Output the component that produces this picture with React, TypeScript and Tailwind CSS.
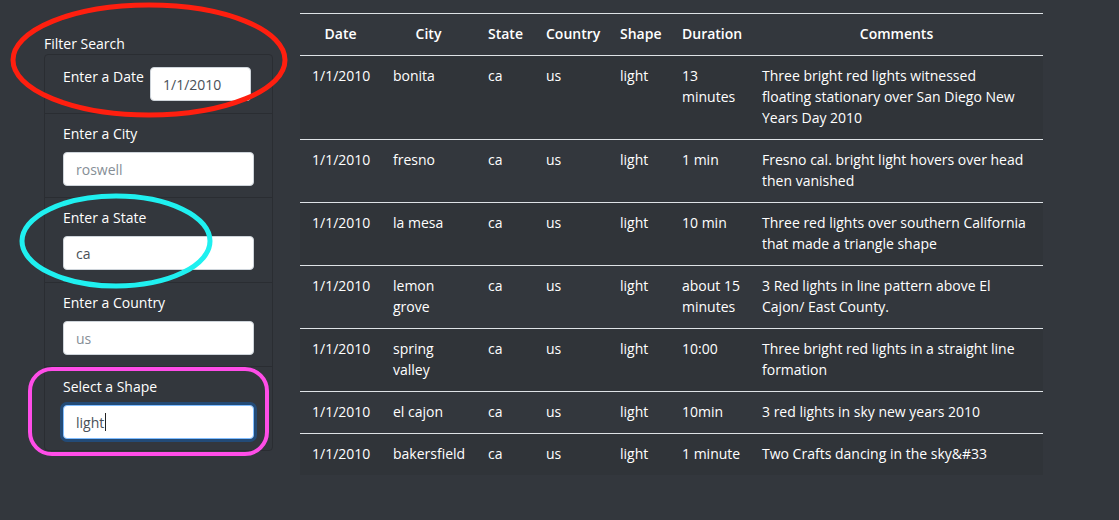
import React from "react";

type Row = { date: string; city: string[]; state: string; country: string; shape: string; duration: string[]; comments: string[] };

const rows: Row[] = [
  { date: "1/1/2010", city: ["bonita"], state: "ca", country: "us", shape: "light", duration: ["13", "minutes"], comments: ["Three bright red lights witnessed", "floating stationary over San Diego New", "Years Day 2010"] },
  { date: "1/1/2010", city: ["fresno"], state: "ca", country: "us", shape: "light", duration: ["1 min"], comments: ["Fresno cal. bright light hovers over head", "then vanished"] },
  { date: "1/1/2010", city: ["la mesa"], state: "ca", country: "us", shape: "light", duration: ["10 min"], comments: ["Three red lights over southern California", "that made a triangle shape"] },
  { date: "1/1/2010", city: ["lemon", "grove"], state: "ca", country: "us", shape: "light", duration: ["about 15", "minutes"], comments: ["3 Red lights in line pattern above El", "Cajon/ East County."] },
  { date: "1/1/2010", city: ["spring", "valley"], state: "ca", country: "us", shape: "light", duration: ["10:00"], comments: ["Three bright red lights in a straight line", "formation"] },
  { date: "1/1/2010", city: ["el cajon"], state: "ca", country: "us", shape: "light", duration: ["10min"], comments: ["3 red lights in sky new years 2010"] },
  { date: "1/1/2010", city: ["bakersfield"], state: "ca", country: "us", shape: "light", duration: ["1 minute"], comments: ["Two Crafts dancing in the sky&#33"] },
];

const Lines = ({ lines }: { lines: string[] }) => (
  <>
    {lines.map((l, i) => (
      <div key={i} className="whitespace-nowrap">{l}</div>
    ))}
  </>
);

const inputCls =
  "block h-[34px] w-full rounded-[4px] border border-[#ced4da] bg-white px-[12px] text-[14px] text-[#495057] outline-none placeholder:text-[#868e96]";

const td = "px-[12px] pt-[9px] pb-[11px] align-top";

export default function App() {
  return (
    <div className="relative flex min-h-[520px] w-full bg-[#33373d] font-['Open_Sans',sans-serif] text-[14px] leading-[21px] text-white">
      <div className="w-[273px] shrink-0 pl-[44px] pt-[33px]">
        <div className="h-[21px] whitespace-nowrap">Filter Search</div>
        <div className="rounded-[4px] border border-[#2a2d32]">
          <div className="flex items-start gap-[6px] border-b border-[#2a2d32] px-[18px] py-[12px]">
            <span className="-mt-px w-[81px] shrink-0 whitespace-nowrap">Enter a Date</span>
            <input readOnly value="1/1/2010" className={inputCls + " !w-[101px]"} />
          </div>
          <div className="border-b border-[#2a2d32] px-[18px] pt-[9px] pb-[11px]">
            <div className="mb-[8px]">Enter a City</div>
            <input readOnly placeholder="roswell" className={inputCls} />
          </div>
          <div className="border-b border-[#2a2d32] px-[18px] pt-[9px] pb-[12px]">
            <div className="mb-[8px]">Enter a State</div>
            <input readOnly value="ca" className={inputCls} />
          </div>
          <div className="border-b border-[#2a2d32] px-[18px] pt-[9px] pb-[11px]">
            <div className="mb-[8px]">Enter a Country</div>
            <input readOnly placeholder="us" className={inputCls} />
          </div>
          <div className="px-[18px] pt-[9px] pb-[11px]">
            <div className="mb-[8px]">Select a Shape</div>
            <div className="flex h-[34px] w-full items-center rounded-[4px] border border-[#80bdff] bg-white px-[12px] text-[14px] text-[#495057] shadow-[0_0_0_3px_rgba(0,123,255,0.3)]">
              <span>light</span>
              <span className="ml-[1px] inline-block h-[18px] w-[1px] bg-[#222]" />
            </div>
          </div>
        </div>
      </div>

      <div className="ml-[27px] pt-[13px]">
        <table className="w-[743px] table-fixed border-collapse">
          <colgroup>
            <col className="w-[81px]" />
            <col className="w-[95px]" />
            <col className="w-[58px]" />
            <col className="w-[74px]" />
            <col className="w-[62px]" />
            <col className="w-[80px]" />
            <col className="w-[293px]" />
          </colgroup>
          <thead>
            <tr className="border-y border-[#dee2e6]">
              {["Date", "City", "State", "Country", "Shape", "Duration", "Comments"].map((h) => (
                <th key={h} className="px-[12px] pt-[9px] pb-[11px] text-center font-semibold whitespace-nowrap">{h}</th>
              ))}
            </tr>
          </thead>
          <tbody>
            {rows.map((r, i) => (
              <tr key={i} className={(i > 0 ? "border-t border-[#dee2e6] " : "") + (i % 2 === 0 ? "bg-[#303439]" : "")}>
                <td className={td + " whitespace-nowrap"}>{r.date}</td>
                <td className={td}><Lines lines={r.city} /></td>
                <td className={td}>{r.state}</td>
                <td className={td}>{r.country}</td>
                <td className={td}>{r.shape}</td>
                <td className={td}><Lines lines={r.duration} /></td>
                <td className={td}><Lines lines={r.comments} /></td>
              </tr>
            ))}
          </tbody>
        </table>
      </div>

      <svg className="pointer-events-none absolute left-0 top-0" width="300" height="470" viewBox="0 0 300 470">
        <ellipse cx="149" cy="60" rx="136" ry="55" fill="none" stroke="#ff1f0f" strokeWidth="5" />
        <ellipse cx="116" cy="241" rx="94" ry="45" fill="none" stroke="#1ff0f0" strokeWidth="5" />
        <rect x="30" y="369" width="237" height="85" rx="22" fill="none" stroke="#ff4de8" strokeWidth="4" />
      </svg>
    </div>
  );
}
